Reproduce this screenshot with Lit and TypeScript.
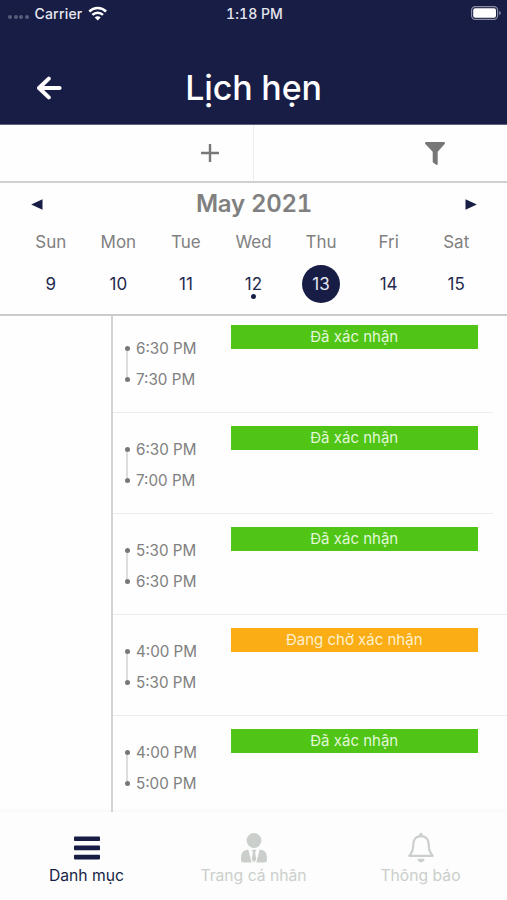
import { LitElement, html, css, svg } from "lit";
import { customElement } from "lit/decorators.js";
import { classMap } from "lit/directives/class-map.js";

const DAYS = [
  { name: "Sun", date: 9 },
  { name: "Mon", date: 10 },
  { name: "Tue", date: 11 },
  { name: "Wed", date: 12, marked: true },
  { name: "Thu", date: 13, selected: true },
  { name: "Fri", date: 14 },
  { name: "Sat", date: 15 },
];

const APPOINTMENTS = [
  { from: "6:30 PM", to: "7:30 PM", pending: false },
  { from: "6:30 PM", to: "7:00 PM", pending: false },
  { from: "5:30 PM", to: "6:30 PM", pending: false },
  { from: "4:00 PM", to: "5:30 PM", pending: true },
  { from: "4:00 PM", to: "5:00 PM", pending: false },
];

const icon = (w: number, h: number, body: unknown) =>
  html`<svg width=${w} height=${h} viewBox="0 0 ${w} ${h}" fill="currentColor">${body}</svg>`;

const wifi = icon(20, 15, svg`
  <g fill="none" stroke="currentColor" stroke-width="2.5">
    <path d="M1.300 5.500a12 12 0 0 1 16.800 0"/>
    <path d="M4.400 8.900a7.500 7.500 0 0 1 10.600 0"/>
  </g>
  <path d="M6.700 11.400a4.200 4.200 0 0 1 6 0L9.700 14.500z"/>`);
const battery = icon(30, 14, svg`
  <rect x=".6" y=".6" width="26" height="12.800" rx="3.600" fill="none" stroke="#8b8ea2" stroke-width="1.200"/>
  <rect x="2.200" y="2.200" width="22.800" height="9.600" rx="2"/>
  <path d="M28.200 4.800q1.600.7 1.600 2.200t-1.600 2.200z" fill="#8b8ea2"/>`);
const back = icon(26, 24, svg`
  <path d="M12.800 2.600 3 12l9.800 9.400M3.400 12h20.200" fill="none" stroke="currentColor" stroke-width="4" stroke-linecap="round" stroke-linejoin="round"/>`);
const plus = icon(18, 18, svg`<path d="M7.800 0h2.400v7.800H18v2.400h-7.800V18H7.800v-7.800H0V7.800h7.800z"/>`);
const funnel = icon(20, 23, svg`<path d="M.7 0h18.600q1.200.8.4 2l-7 7.800V22.300q-.5.9-1.500.4L7.700 20.300V9.800L.3 2Q-.4.8.7 0z"/>`);
const left = icon(12, 11, svg`<path d="M11.500.2v10.600L.2 5.500z"/>`);
const right = icon(12, 11, svg`<path d="M.5.2v10.600L11.800 5.500z"/>`);
const menu = icon(26, 24, svg`
  <rect y=".4" width="26" height="4.600" rx=".8"/><rect y="9.600" width="26" height="4.600" rx=".8"/><rect y="18.800" width="26" height="4.600" rx=".8"/>`);
const person = icon(26, 30, svg`
  <circle cx="13" cy="7.500" r="7.400"/>
  <path d="M7.300 16.500 10.700 29.500H2.600Q0 29.500 0 27V24.500Q0 17.200 7.300 16.500zM18.700 16.500 15.300 29.500h8.100q2.600 0 2.600-2.500V24.500q0-7.300-7.300-8z"/>
  <path d="M10.800 16.800h4.400l-1.100 3 1.200 6.500-2.300 3.200-2.300-3.200 1.200-6.500z"/>`);
const bell = icon(26, 30, svg`
  <path d="M13 3.100C7.600 3.100 5.300 7 5.300 11.500c0 6.500-1.500 8.700-4 11.300h23.400c-2.500-2.600-4-4.800-4-11.300 0-4.500-2.300-8.400-7.700-8.400z" fill="none" stroke="currentColor" stroke-width="2.200" stroke-linejoin="round"/>
  <path d="M11.400 2.800V1.500a1.600 1.600 0 0 1 3.200 0v1.300zM9.400 25.800h7.200q-.6 3.400-3.600 3.400t-3.600-3.400z"/>`);

@customElement("app-root")
export class AppRoot extends LitElement {
  static styles = css`
    :host {
      display: flex;
      flex-direction: column;
      height: 900px;
      overflow: hidden;
      background: #fefefe;
      color: #808080;
      font-family: Inter, "Liberation Sans", sans-serif;
    }
    * { box-sizing: border-box; }
    svg { display: block; flex: none; }
    header { height: 125px; flex: none; background: #171d45; color: #fff; border-bottom: 1px solid #5d617e; }
    .status { height: 26px; display: grid; grid-template-columns: 1fr auto 1fr; align-items: center; padding: 0 6px 0 8px; font-size: 14px; font-weight: 500; color: #e6e7ee; }
    .clock { letter-spacing: .05px; font-variant-numeric: tabular-nums; }
    .carrier { display: flex; align-items: center; letter-spacing: .2px; }
    .signal { display: flex; gap: 1.500px; margin: 8px 6px 0 0; }
    .signal i { width: 4px; height: 4px; border-radius: 50%; background: #5a5e7b; }
    .carrier svg { margin-left: 6px; }
    .status svg { color: #fff; }
    .battery { justify-self: end; }
    .nav { height: 98px; display: grid; grid-template-columns: 97px 1fr 97px; place-items: center; padding-top: 25px; }
    h1 { margin: 0; font-size: 34px; line-height: 42px; font-weight: 500; white-space: nowrap; letter-spacing: -.15px; }
    .tools { display: grid; grid-template-columns: 254px 1fr; height: 58px; flex: none; border-bottom: 2px solid #d0d0d0; color: #777; }
    .tools div { display: flex; justify-content: flex-end; align-items: center; }
    .add { padding-right: 34px; border-right: 1px solid #eee; }
    .filter { padding-right: 62px; }
    .calendar { height: 133px; flex: none; border-bottom: 2px solid #ccc; }
    .month { height: 42px; display: flex; align-items: center; justify-content: space-between; padding: 0 30px 0 31px; color: #171d45; }
    h2 { margin: 0; color: #808080; font-size: 24px; line-height: 30px; font-weight: 600; font-variant-numeric: tabular-nums; letter-spacing: -.25px; }
    .week { display: grid; grid-template-columns: repeat(7, 1fr); padding: 0 17px; text-align: center; }
    .name { font-size: 17px; line-height: 34px; height: 40px; }
    .date { width: 38px; height: 38px; margin: auto; border-radius: 50%; color: #24294f; font-size: 17px; line-height: 38px; position: relative; }
    .selected { background: #171d45; color: #e6e7f0; }
    .marked::after { content: ""; position: absolute; left: 16.500px; top: 29px; width: 5px; height: 5px; border-radius: 50%; background: #171d45; }
    main { flex: 1; min-height: 0; overflow: hidden; margin-left: 111px; border-left: 2px solid #d3d3d3; position: relative; z-index: 1; }
    .list { margin-top: -4px; }
    .row { height: 101px; border-bottom: 1px solid #ececec; display: flex; align-items: flex-start; }
    .row.short { width: 380px; }
    .times { width: 117.500px; padding: 21px 0 0 11.500px; display: flex; gap: 6.500px; font-size: 15.200px; line-height: 31px; }
    .rail { width: 5px; height: 36px; margin-top: 12.500px; display: flex; flex-direction: column; align-items: center; }
    .dot { width: 5px; height: 5px; border-radius: 50%; background: #777; }
    .line { flex: 1; width: 2px; background: #ddd; }
    .badge { margin-top: 13px; width: 247.500px; height: 23.500px; line-height: 24px; background: #50c516; color: #e2f7d8; font-size: 15px; text-align: center; }
    .pending { background: #faad14; color: #fff0cf; }
    footer { flex: none; height: 88px; display: grid; grid-template-columns: repeat(3, 167px); justify-content: center; background: #fcfdfc; box-shadow: 0 -2px 3px #f8f8f8; color: #cbcfcb; font-size: 15.700px; }
    .tab { display: flex; flex-direction: column; align-items: center; }
    .icon { height: 52px; display: flex; align-items: center; padding-top: 20px; }
    .tab span { line-height: 23px; white-space: nowrap; }
    .active { color: #171d45; }
  `;

  render() {
    return html`
      <header>
        <div class="status">
          <div class="carrier"><div class="signal"><i></i><i></i><i></i><i></i></div><span>Carrier</span>${wifi}</div>
          <span class="clock">1:18 PM</span>
          <div class="battery">${battery}</div>
        </div>
        <div class="nav">${back}<h1>Lịch hẹn</h1></div>
      </header>
      <section class="tools">
        <div class="add">${plus}</div>
        <div class="filter">${funnel}</div>
      </section>
      <section class="calendar">
        <div class="month">${left}<h2>May 2021</h2>${right}</div>
        <div class="week">
          ${DAYS.map((d) => html`<div>
            <div class="name">${d.name}</div>
            <div class=${classMap({ date: true, selected: !!d.selected, marked: !!d.marked })}>${d.date}</div>
          </div>`)}
        </div>
      </section>
      <main>
        <div class="list">
          ${APPOINTMENTS.map((a, i) => html`<div class=${classMap({ row: true, short: i < 2 })}>
            <div class="times">
              <div class="rail"><div class="dot"></div><div class="line"></div><div class="dot"></div></div>
              <div><div>${a.from}</div><div>${a.to}</div></div>
            </div>
            <div class=${classMap({ badge: true, pending: a.pending })}>${a.pending ? "Đang chờ xác nhận" : "Đã xác nhận"}</div>
          </div>`)}
        </div>
      </main>
      <footer>
        <div class="tab active"><div class="icon">${menu}</div><span>Danh mục</span></div>
        <div class="tab"><div class="icon">${person}</div><span>Trang cá nhân</span></div>
        <div class="tab"><div class="icon">${bell}</div><span>Thông báo</span></div>
      </footer>
    `;
  }
}
